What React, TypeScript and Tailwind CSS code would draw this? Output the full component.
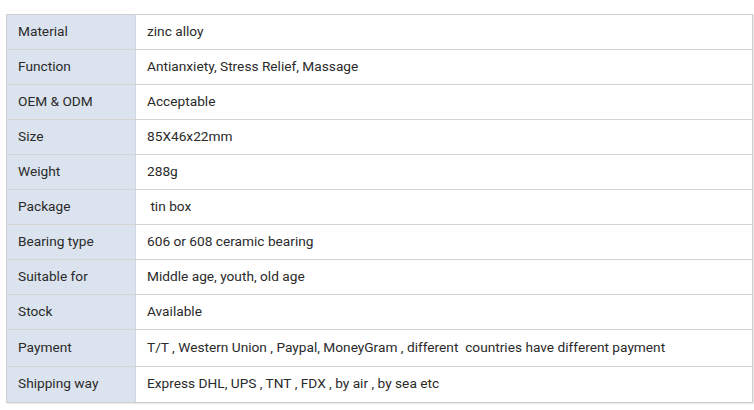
const rows: [string, string, string][] = [
  ['Material', 'zinc alloy', 'h-[34px]'],
  ['Function', 'Antianxiety, Stress Relief, Massage', 'h-[34px]'],
  ['OEM & ODM', 'Acceptable', 'h-[34px]'],
  ['Size', '85X46x22mm', 'h-[34px]'],
  ['Weight', '288g', 'h-[34px]'],
  ['Package', '\u00a0tin box', 'h-[34px]'],
  ['Bearing type', '606 or 608 ceramic bearing', 'h-[34px]'],
  ['Suitable for', 'Middle age, youth, old age', 'h-[34px]'],
  ['Stock', 'Available', 'h-[34px]'],
  ['Payment', 'T/T , Western Union , Paypal, MoneyGram , different\u00a0 countries have different payment', 'h-[36px]'],
  ['Shipping way', 'Express DHL, UPS , TNT , FDX , by air , by sea etc', 'h-[35px]'],
]

export default function App() {
  return (
    <div className="w-[754px] h-[410px] bg-white pt-[14px] pl-[6px] font-['Roboto',sans-serif] text-[13.7px] text-[#2a2a2a]">
      <div className="w-[747px] border border-[#cfcfcf] shadow-[1px_1px_1px_rgba(0,0,0,0.08)]">
        {rows.map(([k, v, h], i) => (
          <div key={k} className={`flex ${h} box-content ${i > 0 ? 'border-t border-[#d4d4d4]' : ''}`}>
            <div className="w-[129px] bg-[#dbe3ee] border-r border-[#d0d6de] flex items-center pl-[11px] pb-[2px]">{k}</div>
            <div className="flex-1 flex items-center pl-[11px] pb-[2px]">{v}</div>
          </div>
        ))}
      </div>
    </div>
  )
}
